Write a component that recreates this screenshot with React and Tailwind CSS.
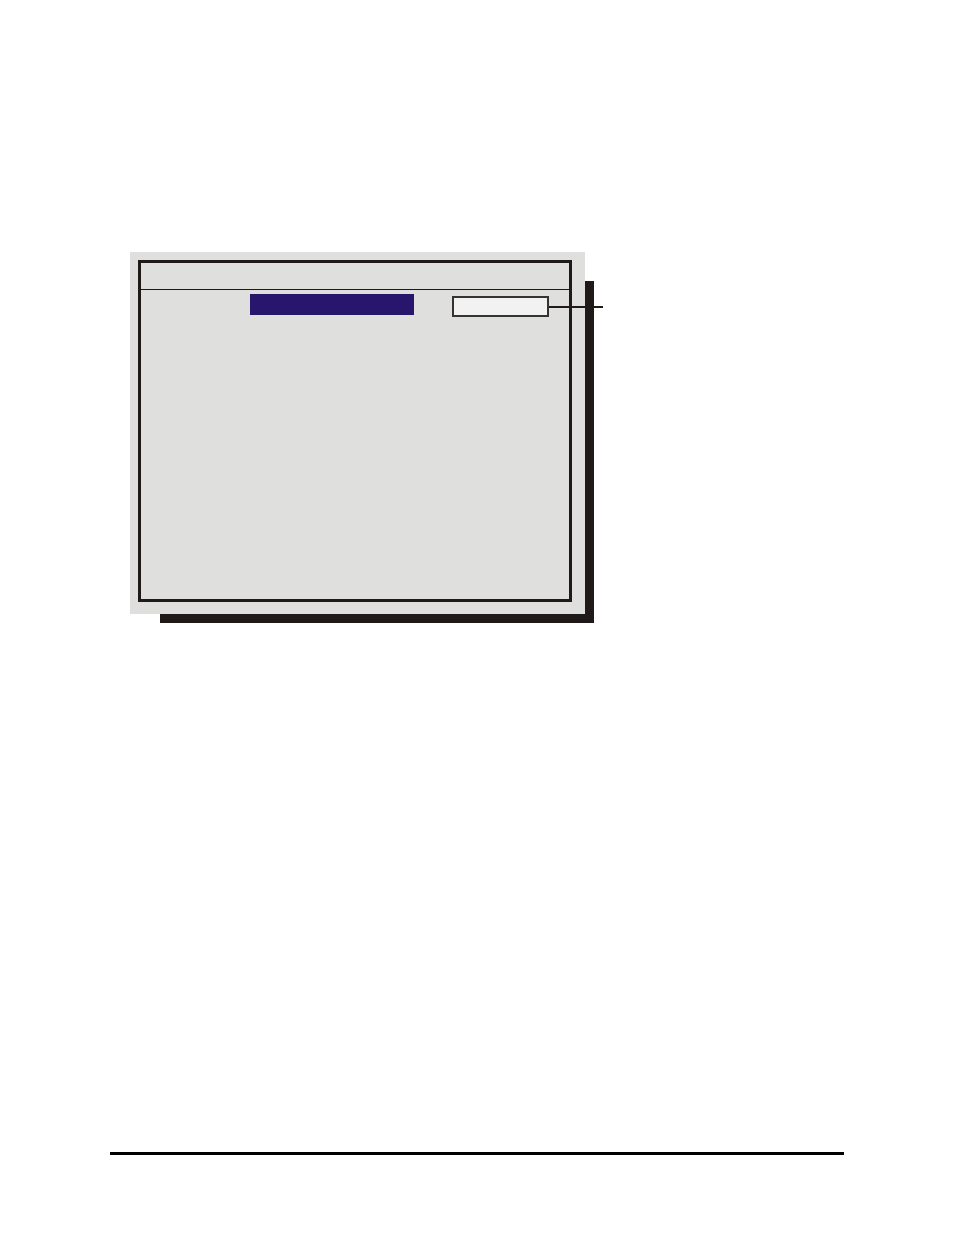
import React from 'react';

const Callout = () => (
  <div className="relative flex">
    <input
      type="text"
      aria-label="Value"
      className="w-[97px] h-[21px] px-1 bg-[#f2f2f2] border-2 border-[#373330] text-xs outline-none"
    />
    {/* leader line runs out over the window edge */}
    <span className="absolute left-full top-[10px] w-[54px] h-0.5 bg-[#1f1a17]"></span>
  </div>
);

const Screen = () => (
  <section className="grid w-full max-w-[464px]">
    {/* hard drop shadow, same grid cell as the window */}
    <div className="col-start-1 row-start-1 ml-[30px] mt-[29px] bg-[#1f1a17]"></div>

    <div className="relative col-start-1 row-start-1 mr-[9px] mb-[9px] pt-2 pl-2 pr-[13px] pb-3 bg-[#dfdfdd]">
      <div className="border-3 border-[#1f1a17]">
        <header className="h-[27px] border-b border-[#1f1a17]"></header>
        <div className="flex items-end justify-end gap-[38px] pt-1 pr-5">
          <div className="w-[164px] h-[21px] mb-0.5 bg-[#27166b]"></div>
          <Callout />
        </div>
        <div className="h-[282px]"></div>
      </div>
    </div>
  </section>
);

const App = () => {
  return (
    <div className="flex flex-col min-h-screen px-[110px] pt-[252px] pb-20 bg-white font-['Liberation_Sans',sans-serif]">
      <main className="pl-5">
        <Screen />
      </main>
      <hr className="mt-auto border-t-3 border-black" />
    </div>
  );
};

export default App;
